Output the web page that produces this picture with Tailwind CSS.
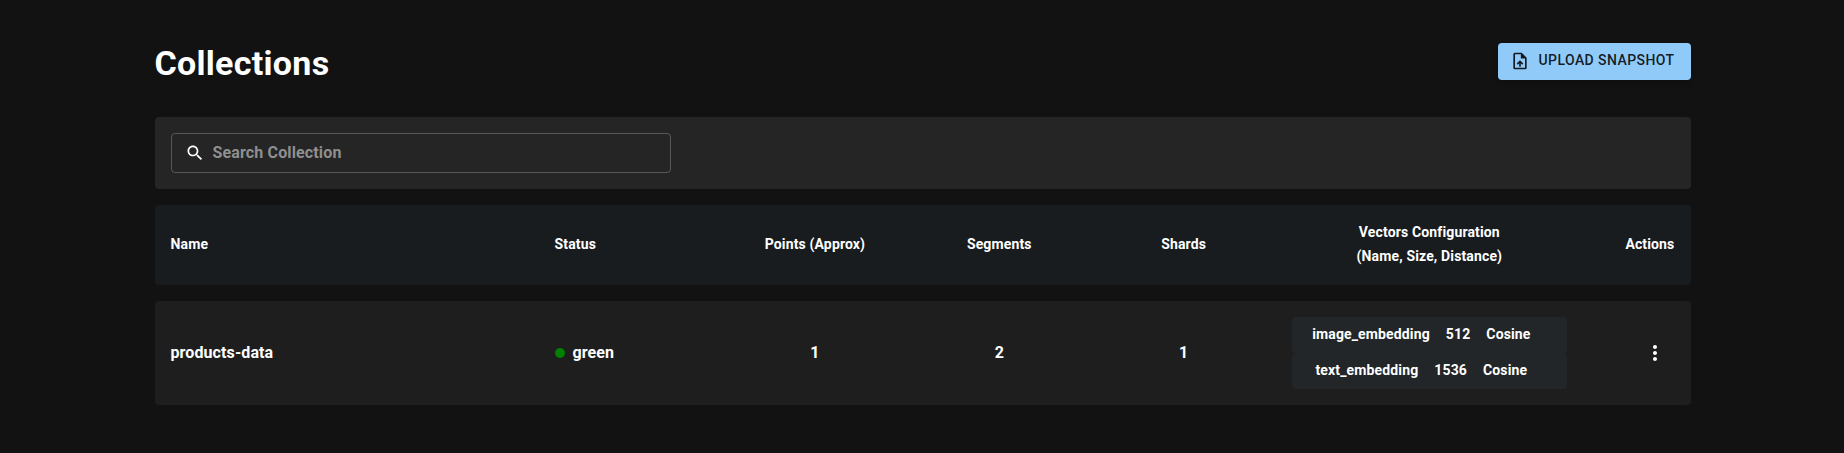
<!DOCTYPE html>
<html lang="en">
<head>
<meta charset="utf-8">
<title>Collections</title>
<script src="https://cdn.jsdelivr.net/npm/@tailwindcss/browser@4"></script>
</head>
<body class="h-screen overflow-hidden bg-[#121212] font-['Roboto',sans-serif] font-bold text-white">
<main class="ml-[155px] w-[1536px] pt-[43px]">
  <header class="flex h-[74px] items-start justify-between">
    <h1 class="-mt-px -ml-[0.5px] text-[34px] leading-[42px] font-bold tracking-[0.29px]">Collections</h1>
    <button class="flex h-[37px] w-[193px] items-center rounded bg-[#90caf9] pl-3 text-[14px] leading-6 font-medium tracking-[0.42px] text-black/87 shadow-md">
      <svg class="mr-[8.5px] -mt-px size-5" viewBox="0 0 24 24" fill="currentColor"><path d="M14 2H6c-1.1 0-1.99.9-1.99 2L4 20c0 1.1.89 2 1.99 2H18c1.1 0 2-.9 2-2V8l-6-6zm4 18H6V4h7v5h5v11zM8 15.01l1.41 1.41L11 14.84V19h2v-4.16l1.59 1.59L16 15.01 12.010 11z"/></svg>
      <span class="pb-[3px] whitespace-nowrap">UPLOAD SNAPSHOT</span>
    </button>
  </header>
  <section class="rounded bg-[#252525] p-4">
    <label class="flex h-10 w-[500px] items-center rounded border border-[#575757] pl-[13px]">
      <svg class="mr-[7.5px] size-5" viewBox="0 0 24 24" fill="currentColor"><path d="M15.500 14h-.79l-.28-.27C15.410 12.590 16 11.110 16 9.500 16 5.910 13.090 3 9.500 3S3 5.910 3 9.500 5.910 16 9.500 16c1.610 0 3.090-.59 4.230-1.570l.27.28v.79l5 4.990L20.490 19l-4.990-5zm-6 0C7.010 14 5 11.990 5 9.500S7.010 5 9.500 5 14 7.010 14 9.500 11.990 14 9.500 14z"/></svg>
      <span class="text-base tracking-[0.14px] text-[#8f8f8f]">Search Collection</span>
    </label>
  </section>
  <div class="mt-4 grid h-20 grid-cols-[25%_12%_12%_12%_12%_20%_7%] items-center rounded bg-[#181c1f] pb-0.5 text-center text-[14px] leading-6 tracking-[0.14px]">
    <div class="pl-[15.5px] text-left">Name</div>
    <div class="pl-[15.5px] text-left">Status</div>
    <div class="pr-px">Points (Approx)</div>
    <div class="pr-px">Segments</div>
    <div class="pr-px">Shards</div>
    <div class="pr-px">Vectors Configuration<br>(Name, Size, Distance)</div>
    <div class="pr-[16.5px] text-right">Actions</div>
  </div>
  <div class="mt-4 grid h-[104px] grid-cols-[25%_12%_12%_12%_12%_20%_7%] items-center rounded bg-[#1e1e1e] text-center text-base tracking-[0.1px]">
    <div class="pl-[15.5px] text-left">products-data</div>
    <div class="flex items-center gap-[7.5px] pl-4"><span class="size-2.5 rounded-full bg-[#008000]"></span>green</div>
    <div class="pr-px">1</div>
    <div class="pr-px">2</div>
    <div class="pr-px">1</div>
    <div class="px-4 text-[14px] leading-5 tracking-[0.14px]">
      <div class="flex h-9 items-center justify-center gap-4 rounded bg-[#222628] pr-[17px] pb-0.5"><span>image_embedding</span><span>512</span><span>Cosine</span></div>
      <div class="flex h-9 items-center justify-center gap-4 rounded bg-[#222628] pr-[17px] pb-0.5"><span>text_embedding</span><span>1536</span><span>Cosine</span></div>
    </div>
    <div class="flex justify-end pr-6">
      <svg class="size-6" viewBox="0 0 24 24" fill="currentColor"><path d="M12 8c1.100 0 2-.9 2-2s-.9-2-2-2-2 .9-2 2 .9 2 2 2zm0 2c-1.100 0-2 .9-2 2s.9 2 2 2 2-.9 2-2-.9-2-2-2zm0 6c-1.100 0-2 .9-2 2s.9 2 2 2 2-.9 2-2-.9-2-2-2z"/></svg>
    </div>
  </div>
</main>
</body>
</html>
